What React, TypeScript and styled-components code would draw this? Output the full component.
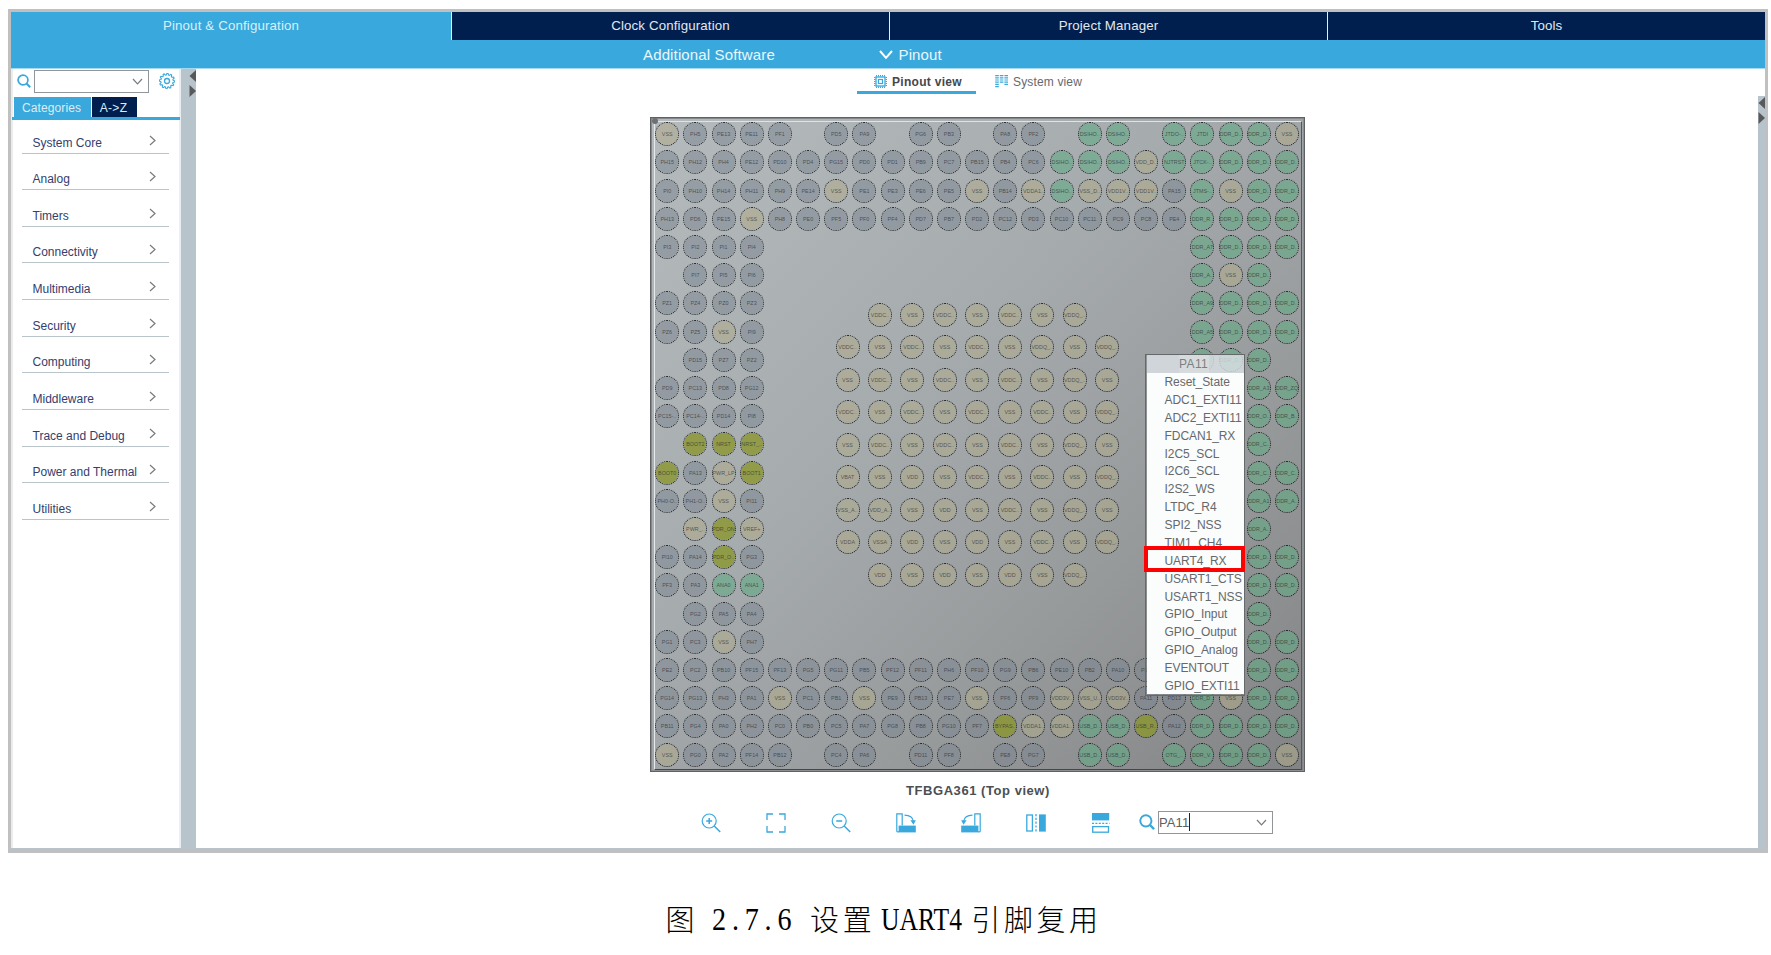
import React from 'react';
import styled, { createGlobalStyle, css } from 'styled-components';

const BLUE = '#39a8dc';
const NAVY = '#001f4f';
const STEEL = '#b8c4cb';
const SANS = '"Liberation Sans", Arial, sans-serif';

const GlobalStyle = createGlobalStyle`
  * { box-sizing: border-box; }
  body { margin: 0; background: #fff; font-family: ${SANS}; overflow: hidden; }
`;

const Page = styled.div`
  width: 1771px;
  height: 955px;
  padding: 9px 3px 0 8px;
  display: flex;
  flex-direction: column;
`;

const Window = styled.section`
  height: 844px;
  border: 3px solid #c0c0c0;
  border-bottom-width: 4px;
  box-shadow: inset 0 -1px 0 ${STEEL};
  display: flex;
  flex-direction: column;
`;

const MainTabs = styled.nav`
  height: 28px;
  flex: none;
  display: grid;
  grid-template-columns: 441px 438px 438px 1fr;
`;

const MainTab = styled.div<{ $active?: boolean }>`
  display: flex;
  align-items: center;
  justify-content: center;
  padding-bottom: 1px;
  background: ${p => (p.$active ? BLUE : NAVY)};
  border-right: 1px solid #e6eef4;
  color: ${p => (p.$active ? '#d8f0fa' : '#e4e8ee')};
  font-size: 13.3px;
  letter-spacing: 0.14px;
  &:last-child { border-right: 0; }
`;

const SubBar = styled.div`
  height: 29px;
  flex: none;
  display: flex;
  align-items: center;
  padding: 0 0 0 632px;
  background: ${BLUE};
  border-bottom: 1px solid #a5d9f1;
  color: #e9f7fd;
  font-size: 15px;
  letter-spacing: 0.14px;
`;

const SubItem = styled.div<{ $wide?: boolean }>`
  display: flex;
  align-items: center;
  gap: 6px;
  white-space: nowrap;
  ${p => p.$wide && css`width: 235.5px;`}
`;

const Body = styled.div`
  flex: 1;
  min-height: 0;
  display: flex;
  margin-bottom: 1px;
`;

const Sidebar = styled.aside`
  width: 170px;
  border-left: 2px solid #ececec;
  border-right: 2px solid #eceff2;
`;

const SearchRow = styled.div`
  display: flex;
  align-items: center;
  height: 24px;
  padding-left: 4px;
`;

const Combo = styled.div<{ $gap: number }>`
  width: 115px;
  height: 23px;
  margin-left: ${p => p.$gap}px;
  border: 1px solid #8f969c;
  display: flex;
  align-items: center;
  padding: 0 5px 0 0;
  font-size: 13px;
  letter-spacing: 0.1px;
  color: #5c6064;
  svg { margin-left: auto; }
`;

const Caret = styled.span`
  width: 1px;
  height: 18px;
  background: #222;
`;

const GearSlot = styled.div`
  display: flex;
  margin: -1px 0 0 10px;
`;

const CategoryTabs = styled.div`
  display: flex;
  gap: 1px;
  height: 23px;
  margin: 4px -1px 0 -1px;
  padding-left: 2px;
  border-bottom: 3px solid ${BLUE};
`;

const CategoryTab = styled.div<{ $active?: boolean; $width: number }>`
  width: ${p => p.$width}px;
  background: ${p => (p.$active ? BLUE : NAVY)};
  color: #dcecf5;
  font-size: 12px;
  letter-spacing: ${p => (p.$active ? '0.1px' : '0.3px')};
  display: flex;
  align-items: center;
  justify-content: center;
  padding: 1px 2px 0 0;
`;

const Categories = styled.ul`
  list-style: none;
  margin: 0;
  padding: 0 10px 0 9px;
`;

const Category = styled.li`
  height: 36.67px;
  display: flex;
  align-items: flex-end;
  padding: 0 13.5px 2px 10.5px;
  border-bottom: 1px solid #b9c5cb;
  color: #33406e;
  font-size: 12px;
  line-height: 15px;
  white-space: nowrap;
  &:first-child { height: 33.5px; }
  svg { margin: 0 0 5px auto; flex: none; }
`;

const Splitter = styled.div<{ $width: number; $top?: number }>`
  width: ${p => p.$width}px;
  margin-top: ${p => p.$top ?? 0}px;
  flex: none;
  background: ${STEEL};
  display: flex;
  flex-direction: column;
  align-items: flex-end;
  gap: 3px;
  padding-top: 1px;
`;

const Workspace = styled.main`
  flex: 1;
  min-width: 0;
  display: flex;
  flex-direction: column;
`;

const ViewTabs = styled.div`
  height: 25px;
  display: flex;
  padding-left: 661px;
  gap: 2px;
`;

const ViewTab = styled.div<{ $active?: boolean }>`
  width: 119px;
  height: 25px;
  display: flex;
  align-items: center;
  gap: 5px;
  padding: 3px 0 0 17px;
  white-space: nowrap;
  font-size: 12px;
  letter-spacing: ${p => (p.$active ? '0.3px' : '0.15px')};
  font-weight: ${p => (p.$active ? 700 : 400)};
  color: ${p => (p.$active ? '#45484b' : '#66696c')};
  border-bottom: 3px solid ${p => (p.$active ? BLUE : 'transparent')};
`;

const Chip = styled.div`
  position: relative;
  width: 654.5px;
  height: 655px;
  flex: none;
  margin: 23px 0 0 454px;
  padding: 2px;
  border: 1px solid #5f6264;
  background: linear-gradient(135deg, #b5babd 0%, #a6abae 40%, #989b9c 68%, #828384 100%);
  box-shadow: inset 1px 1px 0 #85898b, inset -1px -1px 0 #8d8f90;
`;

const ChipFace = styled.div`
  width: 648px;
  height: 649px;
  margin: 1px 0 0 1px;
  border: 1px solid;
  border-color: #dfe3e5 #55585a #44474a #e6e9ea;
`;

const CornerMark = styled.i`
  position: absolute;
  left: 1px;
  top: 0;
  width: 6px;
  height: 6px;
  border-radius: 50%;
  background: #6d7174;
`;

const BallGrid = styled.div`
  display: grid;
  grid-template-columns: repeat(23, 28.18px);
  grid-template-rows: repeat(23, 28.21px);
  margin: -2px 0 0 -1.9px;
`;

const CoreGrid = styled.div`
  grid-column: 6 / 19;
  grid-row: 6 / 19;
  align-self: start;
  display: grid;
  grid-template-columns: repeat(9, 32.47px);
  grid-template-rows: repeat(9, 32.53px);
  margin: 37.3px 0 0 37.3px;
`;

type Kind = 'io' | 'power' | 'system' | 'boot';

const ballColor: Record<Kind, string> = {
  io: 'rgba(122, 132, 143, 0.5)',
  power: 'rgba(176, 172, 138, 0.55)',
  system: 'rgba(98, 170, 132, 0.6)',
  boot: 'rgba(138, 150, 42, 0.78)',
};

const Slot = styled.div<{ $col: number; $row: number }>`
  grid-column: ${p => p.$col};
  grid-row: ${p => p.$row};
  display: flex;
  align-items: center;
  justify-content: center;
`;

const Ball = styled.div<{ $kind: Kind }>`
  width: 24px;
  height: 24px;
  flex: none;
  border-radius: 50%;
  border: 1px dotted #14181c;
  background: ${p => ballColor[p.$kind]};
  background-clip: padding-box;
  display: flex;
  align-items: center;
  justify-content: center;
  font-size: 5.4px;
  color: rgba(45, 48, 50, 0.72);
  white-space: nowrap;
`;

const Menu = styled.div`
  position: absolute;
  left: 494px;
  top: 235.5px;
  width: 100px;
  height: 342px;
  border: 1px solid #66696b;
  box-shadow: inset 0 0 0 0.5px #85888a;
  padding: 0.5px;
`;

const MenuTitle = styled.div`
  height: 18px;
  padding-left: 32.5px;
  background: rgba(220, 226, 231, 0.8);
  color: #7b7f83;
  font-size: 12px;
  line-height: 18px;
  span { display: inline-block; background: rgba(216, 219, 221, 0.9); letter-spacing: 0.4px; padding-right: 1px; }
`;

const MenuList = styled.div`
  background: #fbfcfc;
  padding-top: 1.2px;
  height: 321px;
`;

const MenuItem = styled.div`
  height: 17.86px;
  padding-left: 18px;
  color: #66696c;
  font-size: 12px;
  line-height: 17.5px;
  letter-spacing: -0.06px;
  white-space: nowrap;
`;

const Highlight = styled.div`
  position: absolute;
  left: 493px;
  top: 428px;
  width: 101px;
  height: 26px;
  border: 4px solid #fb0303;
`;

const PackageName = styled.div`
  margin: 10px 0 0 455px;
  width: 654px;
  text-align: center;
  font-size: 13px;
  line-height: 17px;
  font-weight: 700;
  letter-spacing: 0.55px;
  color: #4c4f52;
`;

const Toolbar = styled.div`
  display: flex;
  align-items: center;
  height: 24px;
  margin: 11px 0 0 505px;
`;

const Tool = styled.div`
  width: 65px;
  height: 20px;
  flex: none;
  display: flex;
  padding-top: 0.5px;
`;

const SearchTool = styled.div`
  display: flex;
  align-items: center;
  margin-left: -17px;
`;

const Caption = styled.div`
  display: flex;
  align-items: center;
  height: 44px;
  margin: 44px 0 0 657.5px;
  color: #000;
  font-family: "Liberation Serif", "Noto Sans CJK SC", serif;
  font-size: 32px;
  line-height: 44px;
  white-space: nowrap;
`;

const Han = styled.span`
  font-family: "Noto Sans CJK SC", sans-serif;
  font-weight: 300;
  font-size: 29px;
  letter-spacing: 3.6px;
  margin-top: -3px;
`;

const Numbering = styled.span`
  margin: 0 14px 0 14px;
  width: 84px;
  letter-spacing: 6.6px;
  transform: scaleX(0.88);
  transform-origin: left center;
`;

const Latin = styled.span`
  width: 80px;
  margin: 0 10.5px 0 5.5px;
  transform: scaleX(0.8);
  transform-origin: left center;
`;

const Chevron = ({ w, h, color, sw = 1.2 }: { w: number; h: number; color: string; sw?: number }) => (
  <svg width={w} height={h} viewBox={`0 0 ${w} ${h}`} fill="none" stroke={color} strokeWidth={sw}>
    <path d={`M1 1L${w / 2} ${h - 1.2}L${w - 1} 1`} />
  </svg>
);

const ArrowRight = () => (
  <svg width="7" height="11" viewBox="0 0 7 11" fill="none" stroke="#777b7e" strokeWidth="1.2">
    <path d="M1 1L6 5.5L1 10" />
  </svg>
);

const SearchIcon = ({ size }: { size: number }) => (
  <svg width={size} height={size} viewBox="0 0 14 14" fill="none" stroke={BLUE} strokeWidth="1.7">
    <circle cx="6" cy="6" r="4.9" />
    <path d="M9.5 9.5L13.2 13.2" strokeWidth="2" />
  </svg>
);

const gearPath = Array.from({ length: 48 }, (_, i) => {
  const r = i % 4 < 2 ? 7.7 : 6.1;
  const a = (i / 48) * Math.PI * 2;
  return `${i ? 'L' : 'M'}${(8 + r * Math.cos(a)).toFixed(2)} ${(8 + r * Math.sin(a)).toFixed(2)}`;
}).join('') + 'Z';

const GearIcon = () => (
  <svg width="16" height="16" viewBox="0 0 16 16" fill="none" stroke={BLUE} strokeWidth="1.1">
    <path d={gearPath} />
    <circle cx="8" cy="8" r="2.5" strokeWidth="1.3" />
  </svg>
);

const SplitArrow = ({ left }: { left?: boolean }) => (
  <svg width="7" height="12" viewBox="0 0 7 12" fill="#58595b">
    <path d={left ? 'M7 0V12L0.5 6Z' : 'M0.5 0V12L7 6Z'} />
  </svg>
);

const ChipIcon = () => (
  <svg width="13" height="13" viewBox="0 0 13 13" fill="none" stroke={BLUE}>
    <rect x="2" y="2" width="9" height="9" strokeWidth="1.3" />
    <rect x="4.5" y="4.5" width="4" height="4" strokeWidth="1.2" />
    <path d="M2 .7H11.5M2 12.3H11.5M.7 2V11.5M12.3 2V11.5" strokeWidth="1.4" strokeDasharray="1 1" />
  </svg>
);

const SystemIcon = () => (
  <svg width="13" height="13" viewBox="0 0 13 13" fill="none" stroke={BLUE} strokeWidth="3.6">
    <path d="M2 0V13" strokeDasharray="1.2 1" />
    <path d="M6.6 0V8" strokeDasharray="1.2 1" />
    <path d="M11.2 0V10" strokeDasharray="1.2 1" />
  </svg>
);

const ZoomIcon = ({ plus }: { plus?: boolean }) => (
  <svg width="20" height="20" viewBox="0 0 20 20" fill="none" stroke={BLUE} strokeWidth="1.2">
    <circle cx="8.2" cy="8" r="7" />
    <path d="M13.2 13L19.2 19M5.2 8H11.2" strokeWidth="1.5" />
    {plus && <path d="M8.2 5V11" strokeWidth="1.5" />}
  </svg>
);

const FitIcon = () => (
  <svg width="20" height="20" viewBox="0 0 20 20" fill="none" stroke={BLUE} strokeWidth="1.3">
    <path d="M1 7V1H7M13 1H19V7M19 13V19H13M7 19H1V13" />
  </svg>
);

const RotateIcon = ({ mirror }: { mirror?: boolean }) => (
  <svg width="20" height="20" viewBox="0 0 20 20" fill="none" stroke={BLUE} strokeWidth="1.2">
    <g transform={mirror ? 'translate(20 0) scale(-1 1)' : undefined}>
      <path d="M.8 18.8V.8H6.2V12.5" />
      <path d="M.8 18.8H3" />
      <rect x="2.6" y="12.6" width="17.2" height="6.8" fill={BLUE} stroke="none" />
      <path d="M8.5 2.2C13.2 2.3 16.8 4.3 17.4 8.5" />
      <path d="M14.4 7.3H19.8L17.5 11.8Z" fill={BLUE} stroke="none" />
    </g>
  </svg>
);

const FlipHIcon = () => (
  <svg width="20" height="20" viewBox="0 0 20 20" fill="none" stroke={BLUE} strokeWidth="1.3">
    <rect x=".8" y="2" width="5.6" height="16" />
    <path d="M10 1V19" strokeDasharray="2.2 1.6" />
    <rect x="13" y="1.4" width="6.8" height="17.2" fill={BLUE} stroke="none" />
  </svg>
);

const FlipVIcon = () => (
  <svg width="20" height="20" viewBox="0 0 20 20" fill="none" stroke={BLUE} strokeWidth="1.3">
    <rect x="1" y="0" width="17.2" height="7.4" fill={BLUE} stroke="none" />
    <path d="M1 10.3H18.5" strokeDasharray="2 1.4" />
    <rect x="1.7" y="13.6" width="15.8" height="5.6" />
  </svg>
);

const D = 'DDR_D..';

/* Each row lists runs of [start column, labels]; "." marks an empty position, "*" a ball without a label. */
const rows: [number, string][][] = [
  [[1, `VSS PH5 PE13 PE11 PF1 . PD5 PA9 . PG6 PB3 . PA8 PF2 . DSIHO.. DSIHO.. . JTDO-.. JTDI ${D} ${D} VSS`]],
  [[1, `PH15 PH12 PH4 PE12 PD10 PD4 PG15 PD0 PD1 PB9 PC7 PB15 PB4 PC6 DSIHO.. DSIHO.. DSIHO.. VDD_D.. NJTRST JTCK-.. ${D} ${D} ${D}`]],
  [[1, `PI0 PH10 PH14 PH11 PH9 PE14 VSS PE1 PE3 PE6 PE5 VSS PB14 VDDA1.. DSIHO.. VSS_D.. VDD1V.. VDD1V.. PA15 JTMS-.. VSS ${D} ${D}`]],
  [[1, `PH13 PD6 PE15 VSS PH8 PE0 PF5 PF0 PF4 PD7 PB7 PD2 PC12 PD3 PC10 PC11 PC9 PC8 PE4 DDR_R.. ${D} ${D} ${D}`]],
  [[1, 'PI3 PI2 PI1 PI4'], [20, `DDR_A7 ${D} ${D} ${D}`]],
  [[1, '. PI7 PI5 PI6'], [20, `DDR_A.. VSS ${D}`]],
  [[1, 'PZ1 PZ4 PZ0 PZ3'], [20, `DDR_A9 ${D} ${D} ${D}`]],
  [[1, 'PZ6 PZ5 VSS PI9'], [20, `DDR_A5 ${D} ${D} ${D}`]],
  [[1, '. PD15 PZ7 PZ2'], [20, `* ${D} ${D}`]],
  [[1, 'PD9 PC13 PD8 PG12'], [22, 'DDR_A3 DDR_ZQ']],
  [[1, 'PC15-.. PC14-.. PD14 PI8'], [22, 'DDR_O.. DDR_B..']],
  [[1, '. BOOT2 NRST NRST_..'], [22, 'DDR_C..']],
  [[1, 'BOOT0 PA13 PWR_LP BOOT1'], [22, 'DDR_C.. DDR_C..']],
  [[1, 'PH0-O.. PH1-O.. VSS PI11'], [22, 'DDR_A1 DDR_A..']],
  [[1, '. PWR_.. PDR_ON VREF+'], [22, 'DDR_A..']],
  [[1, 'PI10 PA14 PDR_O.. PG3'], [22, `${D} ${D}`]],
  [[1, 'PF3 PA3 ANA0 ANA1'], [22, `${D} ${D}`]],
  [[1, '. PG2 PA5 PA4'], [22, D]],
  [[1, 'PG1 PC3 VSS PH7'], [22, `${D} ${D}`]],
  [[1, 'PE2 PC2 PB10 PF15 PF13 PG5 PG11 PB5 PF12 PF11 PH6 PF10 PG9 PB6 PE10 PB2 PA10 PE7'], [22, `${D} ${D}`]],
  [[1, `PG14 PG13 PH3 PA1 VSS PC1 PB1 VSS PE9 PB13 PE7 VSS PF6 PF9 VDD3V.. VSS_U.. VDD3V.. PA11 PD13 ${D} VSS ${D} ${D}`]],
  [[1, `PB11 PG4 PA0 PH2 PC0 PB0 PC5 PA7 PG8 PB8 PG10 PF7 BYPAS.. VDDA1.. VDDA1.. USB_D.. USB_D.. USB_R.. PA12 ${D} ${D} ${D} ${D}`]],
  [[1, `VSS PG0 PA2 PF14 PB12 . PC4 PA6 . PD11 PF8 . PE8 PG7 . USB_D.. USB_D.. . OTG_.. DDR_V.. ${D} ${D} VSS`]],
];

const C = 'VDDC..';
const Q = 'VDDQ_..';
const core = [
  `. ${C} VSS ${C} VSS ${C} VSS ${Q} .`,
  `${C} VSS ${C} VSS ${C} VSS ${Q} VSS ${Q}`,
  `VSS ${C} VSS ${C} VSS ${C} VSS ${Q} VSS`,
  `${C} VSS ${C} VSS ${C} VSS ${C} VSS ${Q}`,
  `VSS ${C} VSS ${C} VSS ${C} VSS ${Q} VSS`,
  `VBAT VSS VDD VSS ${C} VSS ${C} VSS ${Q}`,
  `VSS_A.. VDD_A.. VSS VDD VSS ${C} VSS ${Q} VSS`,
  `VDDA VSSA VDD VSS VDD VSS ${C} VSS ${Q}`,
  `. VDD VSS VDD VSS VDD VSS ${Q} .`,
];

const kindOf = (name: string): Kind => {
  if (/^(BOOT|NRST|PDR|BYPAS|USB_R)/.test(name)) return 'boot';
  if (/^(V|PWR)/.test(name)) return 'power';
  if (/^(DDR|DSI|JT|NJ|USB|OTG|ANA|\*)/.test(name)) return 'system';
  return 'io';
};

const Balls = ({ row, start, labels }: { row: number; start: number; labels: string }) => (
  <>
    {labels.split(' ').map((name, i) =>
      name === '.' ? null : (
        <Slot key={i} $col={start + i} $row={row}>
          <Ball $kind={kindOf(name)}>{name === '*' ? null : name}</Ball>
        </Slot>
      ),
    )}
  </>
);

const categories = [
  'System Core', 'Analog', 'Timers', 'Connectivity', 'Multimedia', 'Security',
  'Computing', 'Middleware', 'Trace and Debug', 'Power and Thermal', 'Utilities',
];

const signals = [
  'Reset_State', 'ADC1_EXTI11', 'ADC2_EXTI11', 'FDCAN1_RX', 'I2C5_SCL', 'I2C6_SCL',
  'I2S2_WS', 'LTDC_R4', 'SPI2_NSS', 'TIM1_CH4', 'UART4_RX', 'USART1_CTS', 'USART1_NSS',
  'GPIO_Input', 'GPIO_Output', 'GPIO_Analog', 'EVENTOUT', 'GPIO_EXTI11',
];

export default function App() {
  return (
    <Page>
      <GlobalStyle />
      <Window>
        <MainTabs>
          <MainTab $active>Pinout &amp; Configuration</MainTab>
          <MainTab>Clock Configuration</MainTab>
          <MainTab>Project Manager</MainTab>
          <MainTab>Tools</MainTab>
        </MainTabs>
        <SubBar>
          <SubItem $wide>Additional Software</SubItem>
          <SubItem>
            <Chevron w={14} h={9} color="#fff" sw={2} />
            Pinout
          </SubItem>
        </SubBar>
        <Body>
          <Sidebar>
            <SearchRow>
              <SearchIcon size={14} />
              <Combo $gap={3}>
                <Chevron w={11} h={7} color="#777b7e" />
              </Combo>
              <GearSlot><GearIcon /></GearSlot>
            </SearchRow>
            <CategoryTabs>
              <CategoryTab $active $width={77}>Categories</CategoryTab>
              <CategoryTab $width={45}>A-&gt;Z</CategoryTab>
            </CategoryTabs>
            <Categories>
              {categories.map(name => (
                <Category key={name}>{name}<ArrowRight /></Category>
              ))}
            </Categories>
          </Sidebar>
          <Splitter $width={15}>
            <SplitArrow left />
            <SplitArrow />
          </Splitter>
          <Workspace>
            <ViewTabs>
              <ViewTab $active><ChipIcon />Pinout view</ViewTab>
              <ViewTab><SystemIcon />System view</ViewTab>
            </ViewTabs>
            <Chip>
              <ChipFace>
                <BallGrid>
                  {rows.map((segments, r) =>
                    segments.map(([start, labels]) => (
                      <Balls key={`${r}-${start}`} row={r + 1} start={start} labels={labels} />
                    )),
                  )}
                  <CoreGrid>
                    {core.map((labels, r) => (
                      <Balls key={r} row={r + 1} start={1} labels={labels} />
                    ))}
                  </CoreGrid>
                </BallGrid>
              </ChipFace>
              <CornerMark />
              <Menu>
                <MenuTitle><span>PA11</span></MenuTitle>
                <MenuList>
                  {signals.map(s => <MenuItem key={s}>{s}</MenuItem>)}
                </MenuList>
              </Menu>
              <Highlight />
            </Chip>
            <PackageName>TFBGA361 (Top view)</PackageName>
            <Toolbar>
              <Tool><ZoomIcon plus /></Tool>
              <Tool><FitIcon /></Tool>
              <Tool><ZoomIcon /></Tool>
              <Tool><RotateIcon /></Tool>
              <Tool><RotateIcon mirror /></Tool>
              <Tool><FlipHIcon /></Tool>
              <Tool><FlipVIcon /></Tool>
              <SearchTool>
                <SearchIcon size={16} />
                <Combo $gap={3}>
                  PA11<Caret />
                  <Chevron w={11} h={7} color="#777b7e" />
                </Combo>
              </SearchTool>
            </Toolbar>
          </Workspace>
          <Splitter $width={7} $top={27}>
            <SplitArrow left />
            <SplitArrow />
          </Splitter>
        </Body>
      </Window>
      <Caption>
        <Han>图</Han>
        <Numbering>2.7.6</Numbering>
        <Han>设置</Han>
        <Latin>UART4</Latin>
        <Han>引脚复用</Han>
      </Caption>
    </Page>
  );
}
